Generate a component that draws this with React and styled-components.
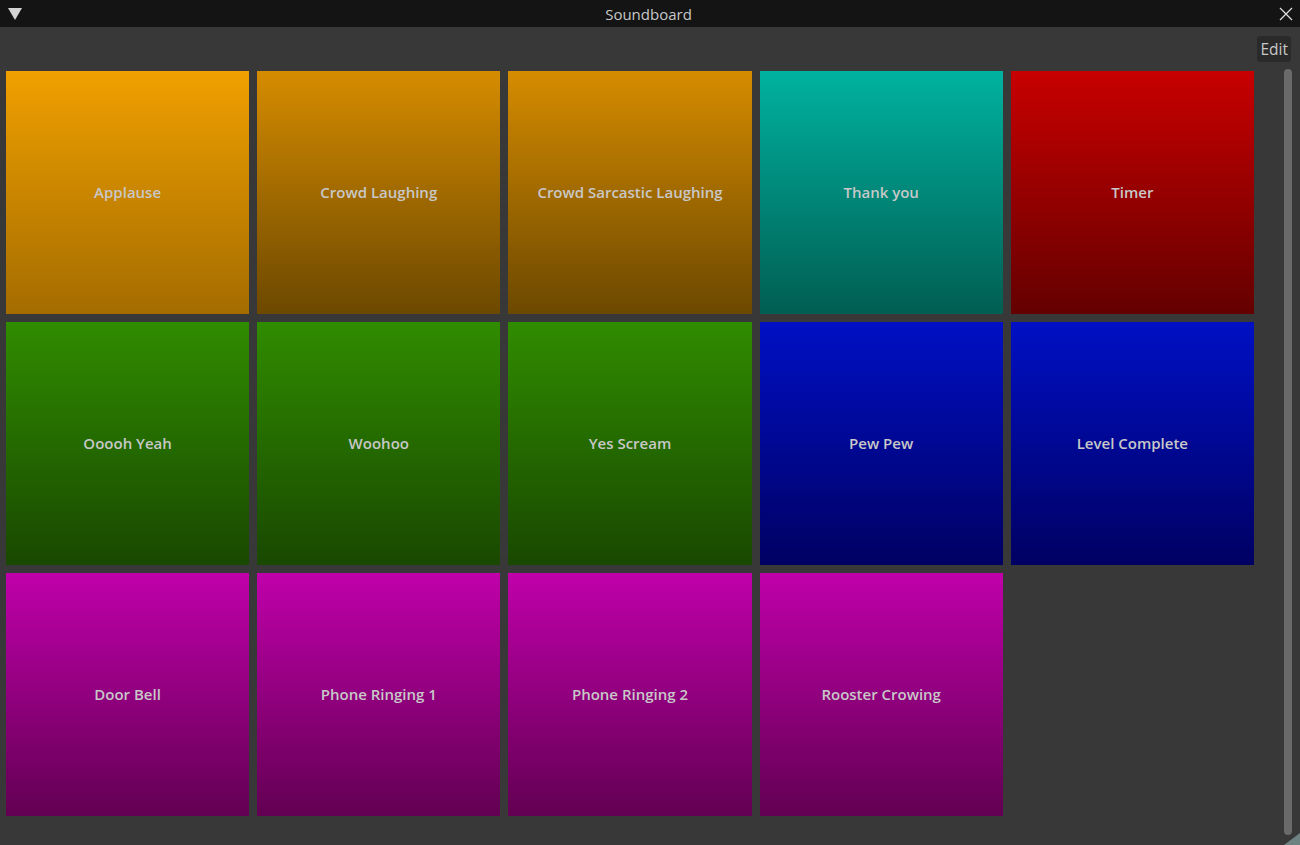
import React from "react";
import styled, { createGlobalStyle } from "styled-components";

const GlobalStyle = createGlobalStyle`
  html, body { margin: 0; padding: 0; background: #383838; }
  body { font-family: "Open Sans", "Noto Sans", sans-serif; overflow: hidden; }
`;

const sounds = [
  { name: "Applause", from: "#f0a000", to: "#a46c00" },
  { name: "Crowd Laughing", from: "#d68c00", to: "#6c4800" },
  { name: "Crowd Sarcastic Laughing", from: "#d68c00", to: "#6c4800" },
  { name: "Thank you", from: "#00b2a0", to: "#005e52" },
  { name: "Timer", from: "#c80000", to: "#640000" },
  { name: "Ooooh Yeah", from: "#308c00", to: "#194800" },
  { name: "Woohoo", from: "#308c00", to: "#194800" },
  { name: "Yes Scream", from: "#308c00", to: "#194800" },
  { name: "Pew Pew", from: "#0010c4", to: "#000062" },
  { name: "Level Complete", from: "#0010c4", to: "#000062" },
  { name: "Door Bell", from: "#c000aa", to: "#620052" },
  { name: "Phone Ringing 1", from: "#c000aa", to: "#620052" },
  { name: "Phone Ringing 2", from: "#c000aa", to: "#620052" },
  { name: "Rooster Crowing", from: "#c000aa", to: "#620052" },
];

const Window = styled.div`
  position: relative;
  width: 1300px;
  height: 845px;
  display: flex;
  flex-direction: column;
  background: #383838;
  overflow: hidden;
`;

const TitleBar = styled.div`
  height: 27px;
  flex: none;
  background: #141414;
  display: flex;
  align-items: center;
  justify-content: space-between;
  padding: 0 6px 0 7px;
  color: #c8c8c8;
  font-size: 15px;
`;

const Title = styled.span`
  flex: 1;
  text-align: center;
  padding-right: 4px;
`;

const IconSlot = styled.span`
  width: 16px;
  height: 16px;
  display: flex;
  align-items: center;
  justify-content: center;
`;

const Content = styled.div`
  flex: 1;
  display: flex;
  flex-direction: column;
`;

const Toolbar = styled.div`
  display: flex;
  justify-content: flex-end;
  padding: 9px 9px 0 0;
  height: 26px;
`;

const EditButton = styled.button`
  height: 26px;
  padding: 0 3px;
  border: none;
  border-radius: 3px;
  background: #2a2a2a;
  color: #c8c8c8;
  font-family: "Open Sans", "Noto Sans", sans-serif;
  font-size: 15.5px;
  line-height: 26px;
`;

const Main = styled.div`
  display: flex;
  padding: 9px 8px 0 6px;
  gap: 30px;
`;

const Grid = styled.div`
  display: grid;
  grid-template-columns: repeat(5, 243.2px);
  grid-auto-rows: 243px;
  gap: 8px;
`;

const Tile = styled.div`
  display: flex;
  align-items: center;
  justify-content: center;
  background: linear-gradient(180deg, ${(p) => p.$from}, ${(p) => p.$to});
  color: #c8c8c8;
  font-size: 15px;
  font-weight: 600;
  padding-bottom: 1px;
`;

const Scrollbar = styled.div`
  width: 8px;
  height: 766px;
  margin-top: -2px;
  border-radius: 4px;
  background: #6a6a6a;
`;

const Grip = styled.svg`
  position: absolute;
  right: 0;
  bottom: 0;
`;

export default function App() {
  return (
    <Window>
      <GlobalStyle />
      <TitleBar>
        <IconSlot>
          <svg width="14" height="12" viewBox="0 0 14 12">
            <polygon points="0,0 14,0 7,12" fill="#d4d4d4" />
          </svg>
        </IconSlot>
        <Title>Soundboard</Title>
        <IconSlot>
          <svg width="14" height="14" viewBox="0 0 14 14">
            <path d="M1 1 L13 13 M13 1 L1 13" stroke="#dcdcdc" strokeWidth="1.3" />
          </svg>
        </IconSlot>
      </TitleBar>
      <Content>
        <Toolbar>
          <EditButton>Edit</EditButton>
        </Toolbar>
        <Main>
          <Grid>
            {sounds.map((s) => (
              <Tile key={s.name} $from={s.from} $to={s.to}>
                {s.name}
              </Tile>
            ))}
          </Grid>
          <Scrollbar />
        </Main>
      </Content>
      <Grip width="26" height="12" viewBox="0 0 26 12">
        <polygon points="26,0 26,12 0,12 10,12 26,0" fill="#6e8282" />
      </Grip>
    </Window>
  );
}
